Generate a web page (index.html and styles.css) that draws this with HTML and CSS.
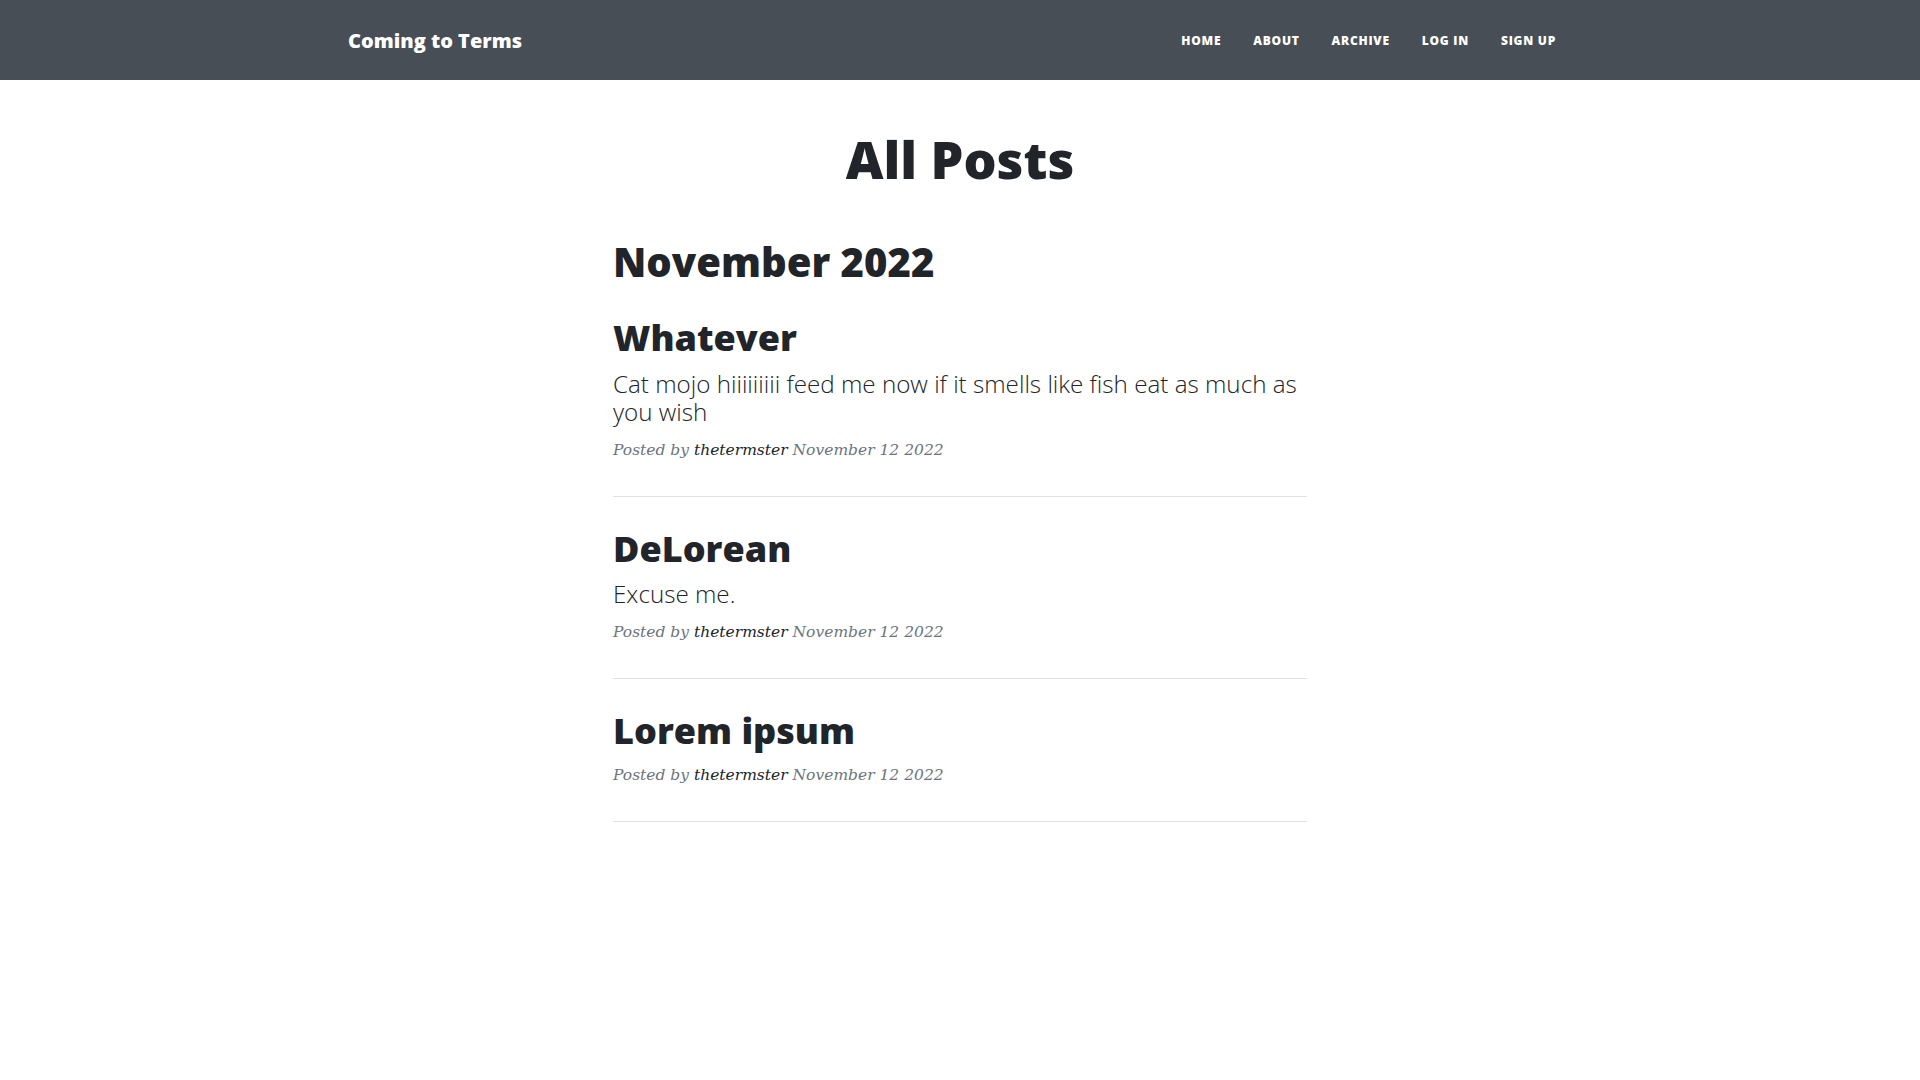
FILE: index.html
```html
<!DOCTYPE html>
<html lang="en">
<head>
<meta charset="utf-8">
<title>Coming to Terms</title>
<link rel="stylesheet" href="styles.css">
</head>
<body>
<nav class="navbar">
  <div class="nav-inner">
    <a class="brand" href="#">Coming to Terms</a>
    <ul class="nav-links">
      <li><a href="#">Home</a></li>
      <li><a href="#">About</a></li>
      <li><a href="#">Archive</a></li>
      <li><a href="#">Log In</a></li>
      <li><a href="#">Sign Up</a></li>
    </ul>
  </div>
</nav>
<main class="content">
  <h1 class="page-title">All Posts</h1>
  <h2 class="month">November 2022</h2>

  <div class="post-preview">
    <a href="#" class="post-link">
      <h3 class="post-title">Whatever</h3>
      <h4 class="post-subtitle">Cat mojo hiiiiiiiii feed me now if it smells like fish eat as much as you wish</h4>
    </a>
    <p class="post-meta">Posted by <a href="#">thetermster</a> November 12 2022</p>
  </div>
  <hr class="divider">

  <div class="post-preview">
    <a href="#" class="post-link">
      <h3 class="post-title">DeLorean</h3>
      <h4 class="post-subtitle">Excuse me.</h4>
    </a>
    <p class="post-meta">Posted by <a href="#">thetermster</a> November 12 2022</p>
  </div>
  <hr class="divider">

  <div class="post-preview">
    <a href="#" class="post-link">
      <h3 class="post-title">Lorem ipsum</h3>
    </a>
    <p class="post-meta">Posted by <a href="#">thetermster</a> November 12 2022</p>
  </div>
  <hr class="divider">
</main>
</body>
</html>
```
FILE: styles.css
```css
* { box-sizing: border-box; }

body {
  margin: 0;
  background: #ffffff;
  color: #212529;
  font-family: "Open Sans", "Liberation Sans", sans-serif;
  font-size: 16px;
  line-height: 1.5;
}

a { color: inherit; text-decoration: none; }

.navbar {
  background: #484e55;
  height: 80px;
}

.nav-inner {
  max-width: 1320px;
  height: 100%;
  margin: 0 auto;
  padding: 2px 48px 0;
  display: flex;
  align-items: center;
  justify-content: space-between;
}

.brand {
  color: #ffffff;
  font-size: 20px;
  font-weight: 800;
  line-height: 1.5;
}

.nav-links {
  list-style: none;
  margin: 0;
  padding: 0;
  display: flex;
}

.nav-links a {
  display: block;
  padding: 8px 16px;
  color: #ffffff;
  font-size: 12px;
  font-weight: 800;
  letter-spacing: 0.0625em;
  text-transform: uppercase;
  line-height: 1.5;
}

.content {
  width: 694px;
  margin: 0 auto;
}

.page-title {
  margin: 48px 0 0;
  text-align: center;
  font-size: 52px;
  font-weight: 800;
  line-height: 1.2;
}

.month {
  margin: 48px 0 8px;
  font-size: 40px;
  font-weight: 800;
  line-height: 1.2;
}

.post-link { display: block; }

.post-title {
  margin: 30px 0 10px;
  font-size: 36px;
  font-weight: 800;
  line-height: 1.2;
}

.post-subtitle {
  margin: 0 0 10px;
  font-size: 24.2px;
  font-weight: 300;
  line-height: 28.8px;
}

.post-meta {
  margin: 0 0 32px;
  color: #6c757d;
  font-family: "DejaVu Serif", "Liberation Serif", serif;
  font-style: italic;
  font-size: 15.5px;
  line-height: 27px;
}

.post-meta a { color: #212529; }

.divider {
  margin: 0 0 30px;
  border: 0;
  border-top: 1px solid #dee2e6;
  height: 0;
}
```
